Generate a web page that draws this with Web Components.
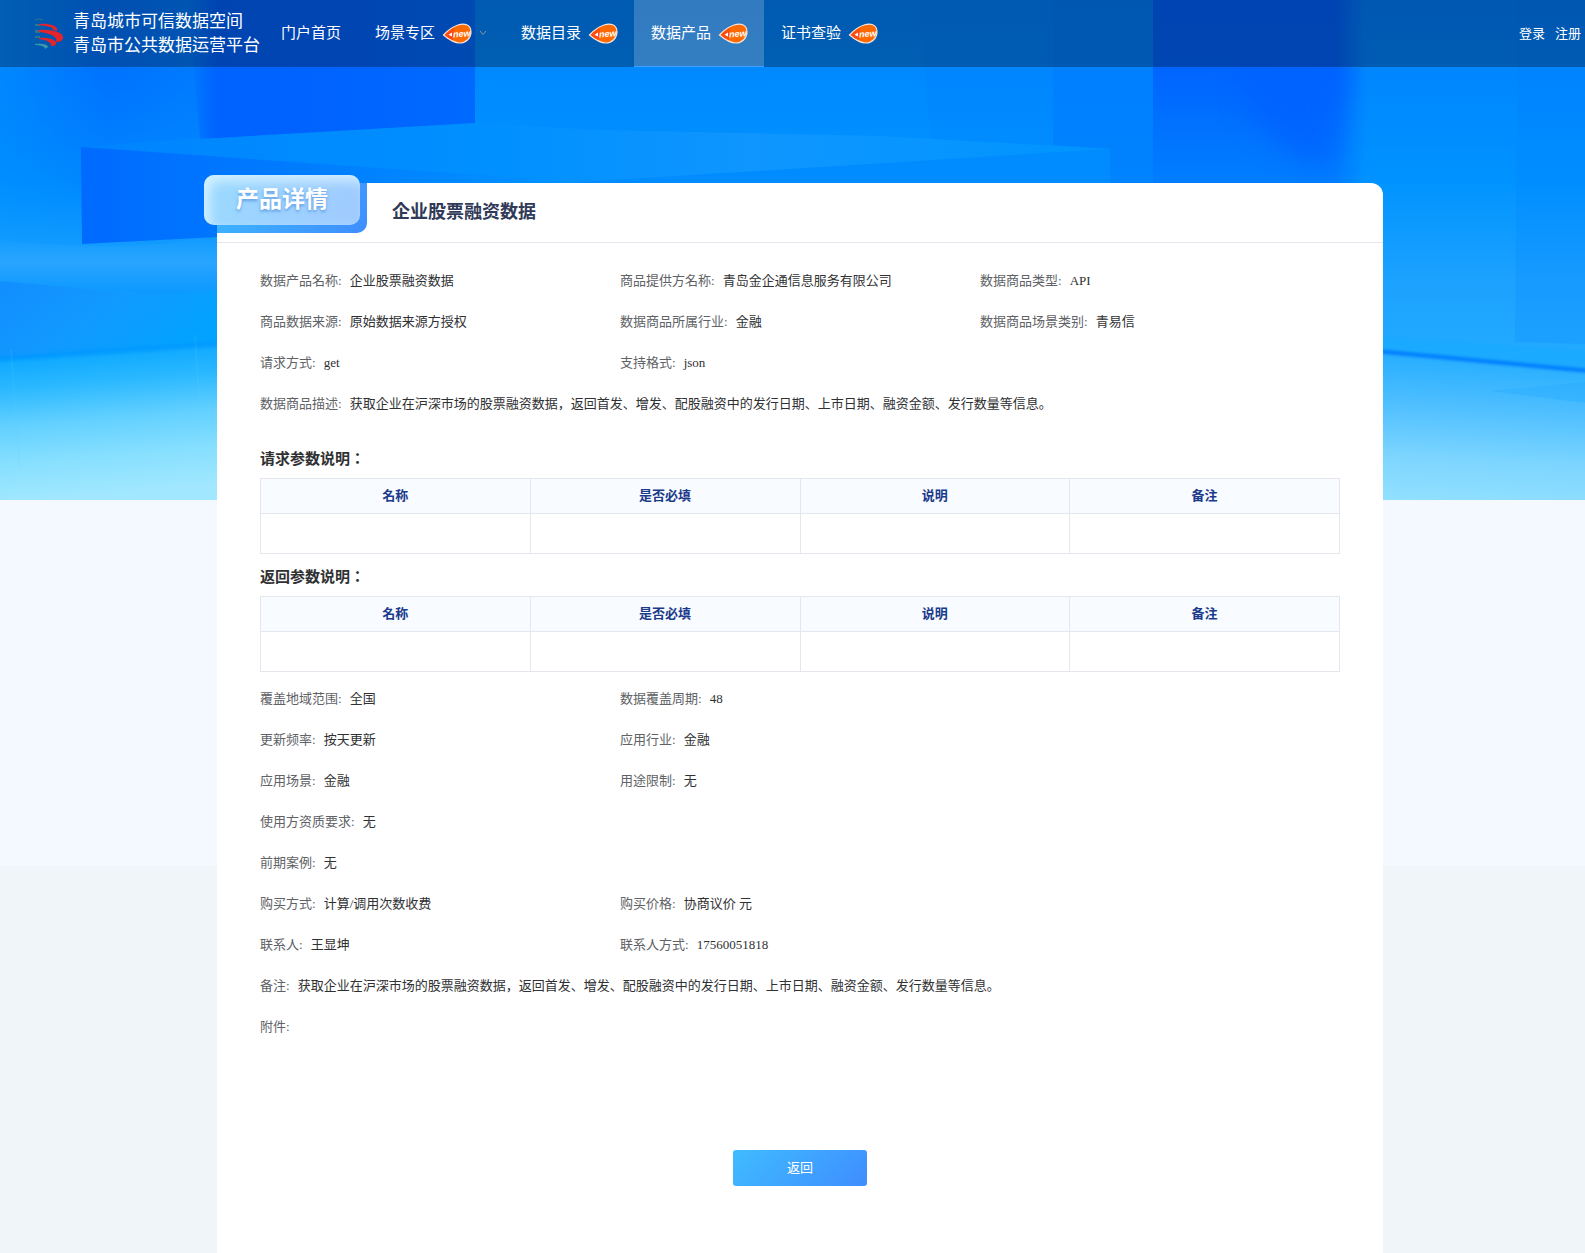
<!DOCTYPE html>
<html>
<head>
<meta charset="utf-8">
<meta name="viewport" content="width=device-width, initial-scale=1">
<title>产品详情</title>
<style>
  body {
    margin: 0;
    background: #f0f5fa;
    color: #303133;
    font: 13px/20px "Liberation Serif", "Noto Sans CJK JP", serif;
  }
</style>
</head>
<body>
<portal-page>
  <hero-backdrop slot="backdrop"></hero-backdrop>
  <site-header slot="header">
    <nav-item href="#home">门户首页</nav-item>
    <nav-item href="#scene" new menu>场景专区</nav-item>
    <nav-item href="#catalog" new>数据目录</nav-item>
    <nav-item href="#product" new active>数据产品</nav-item>
    <nav-item href="#cert" new>证书查验</nav-item>
  </site-header>
  <detail-card tag="产品详情" heading="企业股票融资数据">
    <info-grid>
      <info-field label="数据产品名称">企业股票融资数据</info-field>
      <info-field label="商品提供方名称">青岛金企通信息服务有限公司</info-field>
      <info-field label="数据商品类型">API</info-field>
      <info-field label="商品数据来源">原始数据来源方授权</info-field>
      <info-field label="数据商品所属行业">金融</info-field>
      <info-field label="数据商品场景类别">青易信</info-field>
      <info-field label="请求方式">get</info-field>
      <info-field label="支持格式" span="2">json</info-field>
      <info-field label="数据商品描述" span="3">获取企业在沪深市场的股票融资数据，返回首发、增发、配股融资中的发行日期、上市日期、融资金额、发行数量等信息。</info-field>
    </info-grid>
    <param-table heading="请求参数说明：" first></param-table>
    <param-table heading="返回参数说明："></param-table>
    <info-grid>
      <info-field label="覆盖地域范围">全国</info-field>
      <info-field label="数据覆盖周期" span="2">48</info-field>
      <info-field label="更新频率">按天更新</info-field>
      <info-field label="应用行业" span="2">金融</info-field>
      <info-field label="应用场景">金融</info-field>
      <info-field label="用途限制" span="2">无</info-field>
      <info-field label="使用方资质要求" span="3">无</info-field>
      <info-field label="前期案例" span="3">无</info-field>
      <info-field label="购买方式">计算/调用次数收费</info-field>
      <info-field label="购买价格" span="2">协商议价 元</info-field>
      <info-field label="联系人">王显坤</info-field>
      <info-field label="联系人方式" span="2">17560051818</info-field>
      <info-field label="备注" span="3">获取企业在沪深市场的股票融资数据，返回首发、增发、配股融资中的发行日期、上市日期、融资金额、发行数量等信息。</info-field>
      <info-field label="附件" span="3"></info-field>
    </info-grid>
    <action-button slot="actions">返回</action-button>
  </detail-card>
</portal-page>

<script>
const define = (name, render) => customElements.define(name, class extends HTMLElement {
  connectedCallback() {
    if (this.shadowRoot) return;
    this.attachShadow({ mode: "open" }).innerHTML = render(this);
  }
});

define("portal-page", () => `
  <style>
    :host { display: grid; grid-template-columns: minmax(0, 1fr); min-height: 100vh; }
    .back, .front { grid-area: 1 / 1; }
    .front { display: flex; flex-direction: column; position: relative; }
    main { flex: 1; display: flex; padding: 108px 202px 0 204px; }
    main ::slotted(*) { flex: 1; min-width: 0; }
  </style>
  <div class="back"><slot name="backdrop"></slot></div>
  <div class="front">
    <slot name="header"></slot>
    <main><slot></slot></main>
  </div>`);

define("hero-backdrop", () => `
  <style>
    :host { display: block; height: 866px; background: #f4f8ff; }
    svg { display: block; width: 100%; height: 500px; }
  </style>
  <svg viewBox="0 0 1585 500" preserveAspectRatio="none" aria-hidden="true">
    <defs>
      <linearGradient id="base" x2="0" y2="1">
        <stop offset="0" stop-color="#007eff"/><stop offset=".36" stop-color="#0093ff"/>
        <stop offset=".56" stop-color="#1ca2ff"/><stop offset=".72" stop-color="#22abff"/><stop offset="1" stop-color="#8fe0ff"/>
      </linearGradient>
      <linearGradient id="leftSide"><stop offset="0" stop-color="#0088ff"/><stop offset=".5" stop-color="#0072ff"/><stop offset="1" stop-color="#007cff"/></linearGradient>
      <linearGradient id="fadeDown" x2="0" y2="1"><stop offset="0" stop-color="#fff"/><stop offset=".25" stop-color="#fff"/><stop offset="1" stop-color="#000"/></linearGradient>
      <mask id="downMask"><rect width="220" height="250" fill="url(#fadeDown)"/></mask>
      <linearGradient id="deepLeft"><stop offset="0" stop-color="#0062ff" stop-opacity="0"/><stop offset=".1" stop-color="#0062ff"/><stop offset=".6" stop-color="#0064ff"/><stop offset="1" stop-color="#006aff"/></linearGradient>
      <linearGradient id="deepRight" x2="0" y2="1"><stop offset="0" stop-color="#0060ff"/><stop offset=".35" stop-color="#0066ff"/><stop offset=".7" stop-color="#0077ff"/><stop offset="1" stop-color="#0084ff"/></linearGradient>
      <linearGradient id="edge"><stop offset="0" stop-color="#fff"/><stop offset=".86" stop-color="#fff"/><stop offset="1" stop-color="#000"/></linearGradient>
      <mask id="edgeMask"><rect x="1153" width="212" height="240" fill="url(#edge)"/></mask>
      <linearGradient id="box"><stop offset="0" stop-color="#006aff"/><stop offset=".3" stop-color="#0077ff"/><stop offset="1" stop-color="#0093ff"/></linearGradient>
      <linearGradient id="topFace"><stop offset="0" stop-color="#0084ff"/><stop offset=".4" stop-color="#0090ff"/><stop offset=".65" stop-color="#0f96ff"/><stop offset="1" stop-color="#0094ff"/></linearGradient>
      <linearGradient id="wall" x2="0" y2="1"><stop offset="0" stop-color="#0082ff"/><stop offset="1" stop-color="#0090ff"/></linearGradient>
      <linearGradient id="rim" x2="0" y2="1"><stop offset="0" stop-color="#28a4ff" stop-opacity="0"/><stop offset=".45" stop-color="#28a4ff"/><stop offset="1" stop-color="#0a98ff"/></linearGradient>
      <linearGradient id="slab" x2="1" y2=".5"><stop offset="0" stop-color="#128eff"/><stop offset=".5" stop-color="#1199ff"/><stop offset="1" stop-color="#02a2ff"/></linearGradient>
      <linearGradient id="floorL" gradientUnits="userSpaceOnUse" x1="0" y1="352" x2="12" y2="500">
        <stop offset="0" stop-color="#06a4ff"/><stop offset=".25" stop-color="#2ab8ff"/><stop offset=".5" stop-color="#62d0ff"/><stop offset=".75" stop-color="#86dfff"/><stop offset="1" stop-color="#a0e7ff"/>
      </linearGradient>
      <linearGradient id="floorR" gradientUnits="userSpaceOnUse" x1="1400" y1="352" x2="1392" y2="500">
        <stop offset="0" stop-color="#24adff"/><stop offset=".35" stop-color="#4fbfff"/><stop offset=".7" stop-color="#7cd5ff"/><stop offset="1" stop-color="#92e0ff"/>
      </linearGradient>
      <filter id="soft" x="-20%" y="-20%" width="140%" height="140%"><feGaussianBlur stdDeviation="14"/></filter>
      <filter id="line" x="-5%" y="-80%" width="110%" height="260%"><feGaussianBlur stdDeviation="1.5"/></filter>
    </defs>
    <rect width="1585" height="500" fill="url(#base)"/>
    <rect width="215" height="250" fill="url(#leftSide)" mask="url(#downMask)"/>
    <path d="M475 0H1053V145L880 136 475 124Z" fill="url(#wall)"/>
    <path d="M920 0H1053V145L930 139Z" fill="#007cff" opacity=".2"/>
    <path d="M1053 0H1153V183H1110V149L1053 145Z" fill="#007dff" opacity=".75"/>
    <path d="M1153 0H1365V215H1153Z" fill="url(#deepRight)" mask="url(#edgeMask)"/>
    <path d="M1235 60 1345 60 1330 165 1300 160 1252 118Z" fill="#0060ff" opacity=".75" filter="url(#soft)"/>
    <path d="M1518 0H1585V344L1515 342Z" fill="#0078ff" opacity=".16"/>
    <path d="M81 147 200 138 475 123 600 130 880 136 1110 149 580 183Z" fill="url(#topFace)"/>
    <path d="M188 0H475V123L200 139Z" fill="url(#deepLeft)"/>
    <path d="M81 147 580 182V215L217 237 82 244Z" fill="url(#box)"/>
    <path d="M580 182 1110 149V190H580Z" fill="#008cff"/>
    <path d="M0 240C90 248 130 250 217 236V292L160 295 0 281Z" fill="url(#rim)"/>
    <path d="M0 281 160 295 217 290V344L0 360Z" fill="url(#slab)"/>
    <path d="M0 359 217 343V500H0Z" fill="url(#floorL)"/>
    <path d="M0 359 217 344" stroke="#0096ff" stroke-width="5" opacity=".75" filter="url(#line)"/>
    <path d="M1383 352 1585 371V500H1383Z" fill="url(#floorR)"/>
    <path d="M1383 336 1585 351V371L1383 352Z" fill="#16aaff" opacity=".55"/>
    <path d="M1490 391 1585 382V403Z" fill="#22a8ff" opacity=".35"/>
    <path d="M1375 351 1590 371" stroke="#007dff" stroke-width="4" filter="url(#line)"/>
    <path d="M11 350 20 470M195 335 200 410" stroke="#5fd0ff" stroke-width="2" opacity=".12"/>
  </svg>`);

define("brand-logo", () => `
  <style>:host { display: block; } svg { display: block; }</style>
  <svg width="30" height="34" viewBox="0 0 30 34" aria-hidden="true" fill="none">
    <path d="M1 3Q6 1 9 3" stroke="#2b7a7b" stroke-width="1"/>
    <path d="M1 7H6V9H1Z M1 13H6V16H1Z M1 19H6V21H1Z" fill="#2e768f"/>
    <path d="M5 7C13 6 25 8 23 14L19 13C20 10 12 9 5 8Z" fill="#e3242b"/>
    <path d="M5 13C16 12 29 15 29 20C29 23 27 25 22 25C25 20 15 16 5 15Z" fill="#e3242b"/>
    <path d="M5 21C13 20 24 23 22 27C21 29 19 29 17 29C18 25 12 23 5 22Z" fill="#e3242b"/>
    <path d="M1 27C6 26 14 27 14 30L11 32C11 29 6 28 1 28Z" fill="#3d9aa0"/>
  </svg>`);

define("new-badge", () => `
  <style>:host { display: block; width: 28px; height: 20px; } svg { display: block; overflow: visible; }</style>
  <svg width="28" height="20" viewBox="0 0 28 20" role="img" aria-label="new">
    <path d="M.5 12C4 8 9 4 15 2 21 0 28 1 28 9 28 15 23 20 17 20 10 20 4 15 .5 12Z" fill="#ff6a00" stroke="#f4e4dc" stroke-width="1.200"/>
    <path d="M2 12C5 9 8 6.500 11 5L10 17C7 16 4 14 2 12Z" fill="#ff3c14" opacity=".7"/>
    <path d="M5.500 11.700 9 9.500V13.500Z" fill="#fff"/>
    <text x="10" y="14" transform="rotate(-5 17 11)" font-family="Liberation Sans, sans-serif" font-size="9" font-weight="700" font-style="italic" fill="#fff">new</text>
  </svg>`);

define("site-header", () => `
  <style>
    :host { display: flex; align-items: center; height: 67px; background: rgba(0, 0, 0, .3); color: #fff; }
    .brand { display: flex; align-items: center; gap: 9px; width: 230px; padding-left: 34px; color: inherit; text-decoration: none; font-size: 17px; line-height: 24px; white-space: nowrap; }
    nav { flex: 1; display: flex; align-self: stretch; }
    .account { display: flex; gap: 10px; padding-right: 4px; }
    .account a { color: inherit; text-decoration: none; }
  </style>
  <a class="brand" href="#home"><brand-logo></brand-logo><span>青岛城市可信数据空间<br>青岛市公共数据运营平台</span></a>
  <nav><slot></slot></nav>
  <div class="account"><a href="#login">登录</a><a href="#register">注册</a></div>`);

define("nav-item", el => `
  <style>
    :host { display: flex; font-size: 15px; }
    a { display: flex; align-items: center; gap: 8px; padding: 0 17px; color: #fff; text-decoration: none; white-space: nowrap; border-bottom: 1px solid transparent; }
    :host([active]) a { background: rgba(255, 255, 255, .2); border-color: #409eff; }
  </style>
  <a href="${el.getAttribute("href")}"${el.hasAttribute("active") ? ' aria-current="page"' : ""}>
    <slot></slot>
    ${el.hasAttribute("new") ? "<new-badge></new-badge>" : ""}
    ${el.hasAttribute("menu") ? '<svg width="8" height="6" viewBox="0 0 8 6" fill="none" stroke="#909399" aria-hidden="true"><path d="M1 1l3 3.500L7 1"/></svg>' : ""}
  </a>`);

define("detail-card", el => `
  <style>
    :host { display: flex; }
    article { flex: 1; min-width: 0; position: relative; margin: 8px 0 0 13px; background: #fff; border-radius: 0 12px 0 0; }
    header { display: flex; align-items: center; box-sizing: border-box; height: 60px; padding: 0 43px 2px 175px; border-bottom: 1px solid #e4e7ed; }
    h1 { margin: 0; font-size: 18px; line-height: 24px; color: #303a58; }
    .tag { position: absolute; left: 0; top: 0; width: 150px; height: 50px; border-radius: 0 0 10px 0; background: linear-gradient(135deg, #3cbcff, #3f8dff); }
    .tag strong { position: absolute; left: -13px; top: -8px; width: 156px; height: 50px; border-radius: 10px; text-align: center; font-size: 23px; line-height: 50px; color: #fff; text-shadow: 0 2px 3px rgba(40, 110, 200, .5);
      background: linear-gradient(110deg, #9adaff, #a0caff); box-shadow: inset 6px 6px 12px rgba(225, 246, 255, .8); }
    .body { padding: 17px 43px 67px; }
    .actions { display: flex; justify-content: center; padding-top: 103px; }
  </style>
  <article>
    <header><h1>${el.getAttribute("heading")}</h1></header>
    <div class="tag"><strong>${el.getAttribute("tag")}</strong></div>
    <div class="body">
      <slot></slot>
      <div class="actions"><slot name="actions"></slot></div>
    </div>
  </article>`);

define("info-grid", () => `
  <style>:host { display: grid; grid-template-columns: repeat(3, minmax(0, 1fr)); grid-auto-rows: 41px; align-items: center; }</style>
  <slot></slot>`);

define("info-field", el => `
  <style>
    :host { display: flex; gap: 8px; grid-column: span ${el.getAttribute("span") || 1}; }
    .label { flex: none; color: #606266; }
  </style>
  <span class="label">${el.getAttribute("label")}:</span><span><slot></slot></span>`);

define("param-table", el => `
  <style>
    :host { display: block; padding-bottom: 6px; }
    :host([first]) { padding-top: 12px; padding-bottom: 0; }
    h2 { margin: 0; padding: 11px 0 7px; font-size: 15px; line-height: 24px; }
    table { width: 100%; table-layout: fixed; border-collapse: collapse; border: 1px solid #dcdfe6; }
    th, td { border: 1px solid #e4e7ed; padding: 0; }
    th { height: 34px; background: #f8fbff; color: #1b3a8a; font-weight: 700; }
    td { height: 39px; }
  </style>
  <h2>${el.getAttribute("heading")}</h2>
  <table>
    <thead><tr><th scope="col">名称</th><th scope="col">是否必填</th><th scope="col">说明</th><th scope="col">备注</th></tr></thead>
    <tbody><tr><td></td><td></td><td></td><td></td></tr></tbody>
  </table>`);

define("action-button", () => `
  <style>
    :host { display: block; }
    button { width: 134px; height: 36px; padding: 0; border: 0; border-radius: 3px; color: #fff; font: inherit; cursor: pointer; background: linear-gradient(135deg, #3fbcff, #3f8dff); }
  </style>
  <button type="button"><slot></slot></button>`);
</script>
</body>
</html>
